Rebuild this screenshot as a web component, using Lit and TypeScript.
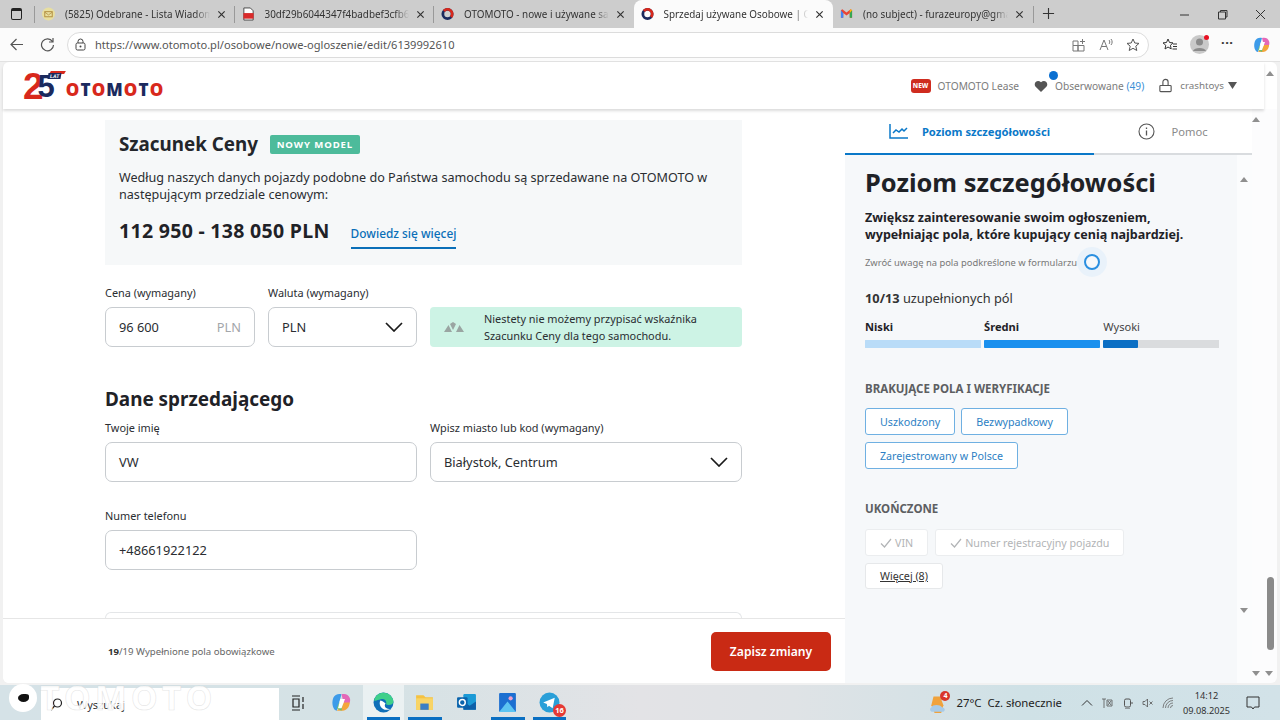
import {LitElement, html, css} from 'lit';
import {customElement} from 'lit/decorators.js';

const otoIcon = html`<svg class="fav" viewBox="0 0 14 14"><circle cx="7" cy="7" r="5" fill="none" stroke="#1b2a5e" stroke-width="3"/><path d="M7 2a5 5 0 0 1 0 10" fill="none" stroke="#d8281c" stroke-width="3" transform="rotate(-50 7 7)"/></svg>`;
const closeIcon = html`<svg class="tab-x" viewBox="0 0 10 10"><path d="M1.5 1.5l7 7M8.5 1.5l-7 7" stroke="#333" stroke-width="1.3" fill="none"/></svg>`;
const chevron = html`<svg class="chev" viewBox="0 0 18 10"><path d="M1 1l8 8 8-8" fill="none" stroke="#1a1a1a" stroke-width="1.7"/></svg>`;
const copilot = html`<svg class="copilot" viewBox="0 0 18 18"><path d="M2 5c1-3 5-4 7-3L7 9 5 16c-3 0-5-6-3-11z" fill="#3d9be9"/><path d="M9 2c3-1 6 0 7 3 1 2 0 5-1 6l-4-1z" fill="#e468b8"/><path d="M11 9h5c0 4-3 7-6 7H5z" fill="#f4a53c"/><path d="M5 14l2-5 3 1-1 6z" fill="#6cc070"/><path d="M8 6h4l-3 8H6z" fill="#fff"/></svg>`;

@customElement('app-root')
export class AppRoot extends LitElement {
  static styles = css`
    :host {
      display: block;
      position: relative;
      width: 1280px;
      height: 720px;
      overflow: hidden;
      background: #fff;
      font-family: "Noto Sans", "Open Sans", sans-serif;
      color: #1f2227;
    }

    /* browser chrome */
    .tabbar {
      height: 28px;
      background: #cdcdcd;
      display: flex;
      align-items: flex-end;
      font-size: 9.9px;
      color: #333;
    }
    .win-btn { width: 9px; height: 8px; border: 1.5px solid #222; border-top-width: 3px; border-radius: 2px; margin: 0 13px 8px 11px; flex: none; }
    .tab {
      height: 28px;
      display: flex;
      align-items: center;
      flex: none;
      position: relative;
      white-space: nowrap;
      width: 199.5px;
      box-sizing: border-box;
      padding: 0 9px 0 7px;
    }
    .tab-title { flex: 1; overflow: hidden; -webkit-mask-image: linear-gradient(90deg, #000 90%, transparent); mask-image: linear-gradient(90deg, #000 90%, transparent); }
    .tab.sep::before { content: ""; position: absolute; left: -1px; top: 6px; height: 17px; width: 1px; background: #999; }
    .tab.active { background: #fbfbfb; border-radius: 8px 8px 0 0; }
    .fav { width: 13px; height: 14px; flex: none; margin-right: 10px; }
    .tab-x { width: 9px; height: 9px; flex: none; margin-left: 7px; }
    .new-tab { width: 1px; height: 17px; background: #999; margin: 0 0 5px 0; flex: none; }
    .tab-plus { width: 13px; height: 13px; margin: 0 0 8px 8px; flex: none; }
    .win-ctrls { margin-left: auto; display: flex; gap: 27px; align-items: center; height: 28px; padding-right: 14px; }
    .win-ctrls svg { width: 11px; height: 11px; }

    .toolbar {
      height: 34px;
      box-sizing: border-box;
      background: #fbfbfb;
      border-bottom: 1px solid #e2e2e2;
      display: flex;
      align-items: center;
      padding-left: 9px;
    }
    .nav-ico { width: 15px; height: 15px; flex: none; }
    .nav-ico.reload { margin-left: 16px; }
    .omnibox {
      flex: none;
      width: 1082px;
      height: 26px;
      margin-left: 12px;
      box-sizing: border-box;
      border: 1px solid #dcdcdc;
      border-radius: 13px;
      background: #fff;
      display: flex;
      align-items: center;
      padding: 0 8px 0 7px;
      font-size: 11.1px;
      color: #555;
    }
    .omnibox .lock { width: 11px; height: 13px; margin-right: 9px; flex: none; }
    .omni-right { margin-left: auto; display: flex; gap: 13px; align-items: center; }
    .omni-right svg { width: 14px; height: 14px; }
    .tool-right { display: flex; align-items: center; margin-left: 13px; }
    .star { width: 16px; height: 16px; }
    .avatar { width: 19px; height: 19px; border-radius: 50%; background: #c9c9c9; position: relative; flex: none; margin-left: 12px; }
    .avatar svg { width: 19px; height: 19px; display: block; }
    .avatar::after { content: ""; position: absolute; right: 0; top: 0; width: 5px; height: 5px; border-radius: 50%; background: #e81123; }
    .dots { font-size: 13px; font-weight: 700; letter-spacing: 0.5px; line-height: 10px; margin: -5px 0 0 12px; color: #333; width: 16px; }
    .toolbar .copilot { width: 18px; height: 18px; margin-left: 16px; }

    /* page */
    .page {
      height: 623px;
      display: flex;
      flex-direction: column;
      background: #f1f1f1;
    }
    .site-header {
      height: 47px;
      flex: none;
      width: 1261px;
      margin-left: 3px;
      border-radius: 6px 0 0 0;
      box-sizing: border-box;
      padding: 0 27px 0 20px;
      display: flex;
      align-items: center;
      box-shadow: 0 2px 3px rgba(0,0,0,.14);
      position: relative;
      z-index: 2;
      background: #fff;
      font-size: 10.2px;
      color: #7c7c7c;
    }
    .logo { display: flex; align-items: flex-end; position: relative; height: 30px; width: 142px; }
    .logo-two { font: 700 37px/30px "Liberation Sans", sans-serif; color: #d8281c; position: relative; top: 1px; }
    .logo-five { font: 700 31px/30px "Liberation Sans", sans-serif; color: #1b2a5e; margin-left: -6px; position: relative; top: 1px; }
    .logo-bar { position: absolute; left: 27px; top: 0; width: 15px; height: 3px; background: #d8281c; transform: skewX(-30deg); }
    .logo-lat { position: absolute; left: 25px; top: 2px; font: 700 5px/6px "Liberation Sans", sans-serif; color: #fff; background: #1b2a5e; padding: 0 2px; transform: skewX(-10deg); }
    .logo-name { font: 800 17px/20px "Open Sans", sans-serif; letter-spacing: 1.1px; color: #1b2a5e; margin-left: 11px; margin-bottom: 1px; }
    .logo-name i { font-style: normal; color: #d8281c; }
    .head-links { margin-left: auto; display: flex; align-items: center; }
    .new { background: #cf2c1f; color: #fff; font: 800 6.5px/14px "Noto Sans", sans-serif; height: 14px; width: 20px; text-align: center; border-radius: 3px; margin-right: 7px; }
    .heart { position: relative; width: 14px; height: 14px; margin-left: 15px; margin-right: 7px; flex: none; }
    .heart svg { width: 14px; height: 14px; display: block; }
    .heart::after { content: ""; position: absolute; right: -9.5px; top: -7.5px; width: 9px; height: 9px; border-radius: 50%; background: #0a6fd1; }
    .blue { color: #3b8fd6; }
    .lock-user { width: 13px; height: 15px; margin-left: 15px; margin-right: 8px; flex: none; }
    .caret { width: 9px; height: 7px; margin-left: 4px; }
    .user { font-size: 9.8px; }

    .body { flex: 1; display: flex; min-height: 0; margin: 0 0 2px 3px; border-radius: 0 0 0 6px; overflow: hidden; }
    .main { width: 842px; flex: none; display: flex; flex-direction: column; position: relative; background: #fff; }
    .form { flex: 1; padding: 11px 0 0 102px; width: 637px; overflow: hidden; }
    .price-card { background: #f6f8f9; height: 145px; box-sizing: border-box; padding: 12px 14px 0 14px; }
    .price-title { display: flex; align-items: center; gap: 12px; font-size: 18.8px; line-height: 24px; font-weight: 700; color: #23262b; }
    .badge { background: #4dbb9b; color: #fff; font-size: 9.6px; font-weight: 700; letter-spacing: .9px; width: 90px; text-align: center; height: 19px; line-height: 19px; border-radius: 2px; }
    .price-desc { font-size: 12.6px; line-height: 17px; margin-top: 13px; width: 600px; color: #2a2d31; }
    .price-row { display: flex; align-items: flex-end; margin-top: 15px; }
    .price-value { font-size: 19.5px; font-weight: 700; letter-spacing: .3px; line-height: 26px; color: #1f2227; }
    .more { margin-left: 21px; font-size: 11.9px; font-weight: 500; color: #0a6fb8; border-bottom: 2px solid #0a6fb8; padding-bottom: 5px; line-height: 18px; margin-bottom: -5px; }

    .row { display: flex; gap: 13px; }
    .row-price { margin-top: 21px; align-items: flex-end; }
    .field label { display: block; font-size: 10.9px; line-height: 14px; margin-bottom: 7px; color: #2a2d31; }
    .input {
      height: 40px;
      box-sizing: border-box;
      border: 1px solid #c8ccd0;
      border-radius: 7px;
      background: #fff;
      display: flex;
      align-items: center;
      padding: 0 13px;
      font-size: 12.8px;
      color: #2a2d31;
    }
    .input .unit { margin-left: auto; color: #a3a6aa; }
    .chev { width: 18px; height: 10px; margin-left: auto; }
    .w150 { width: 150px; }
    .w149 { width: 149px; }
    .w312 { width: 312px; }
    .notice {
      flex: 1;
      height: 40px;
      background: #cdf3e5;
      border-radius: 4px;
      display: flex;
      align-items: center;
      font-size: 10.9px;
      line-height: 17px;
      color: #2a2d31;
      padding-left: 14px;
      box-sizing: border-box;
    }
    .notice svg { width: 20px; height: 10px; flex: none; margin-right: 20px; }
    h2 { font-size: 18.9px; font-weight: 700; line-height: 26px; margin: 0; color: #1f2227; }
    .sect { margin-top: 39px; }
    .row-seller { margin-top: 9px; }
    .phone { margin-top: 27px; }
    .cut { height: 6px; margin-top: 42px; border: 1px solid #e4e6e8; border-bottom: none; border-radius: 6px 6px 0 0; }

    .footer {
      position: absolute;
      left: 0; right: 0; bottom: 0;
      height: 65px;
      background: #fff;
      border-top: 1px solid #e6e6e6;
      box-sizing: border-box;
      display: flex;
      align-items: center;
      padding: 0 14px 0 105px;
      font-size: 9.6px;
      color: #666;
    }
    .footer b { color: #333; }
    .save {
      margin-left: auto;
      width: 120px;
      height: 39px;
      background: #c92a14;
      color: #fff;
      border-radius: 5px;
      font-size: 12.1px;
      font-weight: 600;
      display: flex;
      align-items: center;
      justify-content: center;
    }

    /* side panel */
    .side { width: 407px; flex: none; display: flex; flex-direction: column; background: linear-gradient(90deg, #f6f8fa 96.2%, #fbfcfd 96.2%); }
    .tabs { height: 46px; flex: none; display: flex; background: #fff; font-size: 11.2px; }
    .ptab { box-sizing: border-box; display: flex; align-items: center; justify-content: center; border-bottom: 2px solid #d9dcdf; color: #8a8a8a; }
    .ptab.on { width: 249px; border-bottom-color: #0a78c8; color: #0a78c8; font-weight: 700; }
    .ptab.off { flex: 1; }
    .ptab svg { width: 20px; height: 16px; margin-right: 13px; }
    .ptab.off svg { width: 17px; height: 17px; margin-right: 16px; }
    .side-body { flex: 1; padding: 11px 0 0 20px; }
    .side-body h1 { font-size: 25.4px; line-height: 32px; margin: 0; font-weight: 700; color: #1f2227; }
    .lead { font-size: 12.55px; line-height: 17px; font-weight: 700; margin-top: 11px; color: #1f2227; }
    .hint { display: flex; align-items: center; font-size: 9.4px; color: #777; margin-top: 8px; height: 22px; }
    .dot { width: 12px; height: 12px; border: 2px solid #2a8fe0; border-radius: 50%; margin: -1px 0 0 7px; box-shadow: 0 0 0 7px #e9f2fa; }
    .count { font-size: 12.8px; line-height: 18px; margin-top: 16px; color: #333; }
    .levels { display: flex; gap: 3.3px; width: 354px; margin-top: 12px; font-size: 11.1px; line-height: 16px; color: #444; }
    .level { flex: 1; }
    .level b { color: #1f2227; }
    .bar { height: 8px; margin-top: 5px; background: #dadcde; }
    .bar span { display: block; height: 100%; border-radius: 1px; }
    .sect-title { font-size: 11.5px; font-weight: 700; color: #5d5f62; line-height: 16px; margin-top: 33px; }
    .chips { display: flex; flex-wrap: wrap; gap: 7px 6px; margin-top: 11px; width: 330px; }
    .chip { height: 27px; box-sizing: border-box; border: 1px solid #6fb0e2; border-radius: 3px; padding: 0 14px; display: flex; align-items: center; font-size: 10.7px; color: #2d7fc4; background: #fff; }
    .chip.done { border-color: #ebedef; color: #b2b4b6; }
    .chip.done svg { width: 12px; height: 10px; margin-right: 3px; }
    .chip.more-chip { border-color: #e6e8ea; color: #333; text-decoration: underline; height: 26px; }
    .tight { margin-top: 32px; }
    .chips.c2 { margin-top: 12px; gap: 7px 7px; }

    /* scroll strip, lies over the page edge */
    .arrow { position: absolute; width: 0; height: 0; border-left: 4.5px solid transparent; border-right: 4.5px solid transparent; }
    .arrow.up { border-bottom: 5px solid #8f8f8f; }
    .arrow.down { border-top: 5px solid #8f8f8f; }
    .thumb { position: absolute; left: 1267px; top: 577px; width: 7px; height: 73px; background: #8a8a8a; border-radius: 4px; }
    .side-bg { position: absolute; left: 1252px; top: 109px; width: 25px; height: 574px; background: #fcfcfd; border-radius: 0 0 6px 0; }
    .top-strip { position: absolute; left: 1264px; top: 62px; width: 13px; height: 47px; background: #fff; border-radius: 0 6px 0 0; }

    /* taskbar */
    .taskbar {
      position: relative;
      height: 35px;
      background: linear-gradient(90deg, #d5e2e7 0, #d5e2e5 30%, #e3e3e6 50%, #dfe3e6 62%, #cfe1e6 80%, #d2e2e8 100%);
      display: flex;
      align-items: center;
      font-size: 12px;
      color: #222;
    }
    .start { width: 41px; flex: none; }
    .search { width: 238px; height: 32px; margin-top: 3px; background: #fff; flex: none; display: flex; align-items: center; padding-left: 9px; box-sizing: border-box; font-size: 11px; color: #333; }
    .search svg { width: 13px; height: 13px; margin-right: 14px; }
    .apps { display: flex; align-items: center; }
    .app { width: 41.5px; height: 35px; display: flex; align-items: center; justify-content: center; position: relative; flex: none; }
    .app svg { width: 21px; height: 21px; }
    .app.first { width: 38px; margin-right: 4px; }
    .app.first svg { width: 14px; height: 16px; }
    .app.cur { background: rgba(255,255,255,.5); }
    .app.run::after { content: ""; position: absolute; left: 4px; right: 4px; bottom: 0; height: 3px; background: #0a6fc2; }
    .count-badge { position: absolute; right: 4px; bottom: 3px; width: 13px; height: 13px; border-radius: 50%; background: #e53935; color: #fff; font-size: 7.5px; line-height: 13px; text-align: center; font-weight: 700; }
    .tray { margin-left: auto; display: flex; align-items: center; }
    .weather { width: 20px; height: 22px; position: relative; margin-right: 7px; flex: none; }
    .weather svg { width: 20px; height: 22px; display: block; }
    .weather span { position: absolute; right: -1px; top: -1px; width: 10px; height: 10px; border-radius: 50%; background: #d9362b; color: #fff; font-size: 7px; line-height: 10px; text-align: center; font-weight: 700; }
    .tray-txt { font-size: 11.4px; white-space: nowrap; }
    .tray-ico { display: flex; gap: 8.25px; align-items: center; margin-left: 19px; }
    .tray-ico svg { width: 12px; height: 12px; }
    .clock { font-size: 9.2px; line-height: 15px; text-align: center; margin-left: 9px; color: #333; }
    .notif { width: 14px; height: 14px; margin: 0 20px 0 16px; }
    /* watermark that sits over the start button and search box */
    .ghost { position: absolute; left: 40px; top: -7px; font: 700 34px/38px "Open Sans", sans-serif; letter-spacing: 4px; color: rgba(255,255,255,.92); -webkit-text-stroke: .6px rgba(190,190,190,.4); white-space: nowrap; }
    .ghost-dot { position: absolute; left: 9px; top: -1px; width: 28px; height: 28px; border-radius: 50%; background: #fff; display: flex; align-items: center; justify-content: center; }
    .ghost-dot::after { content: ""; width: 11px; height: 8px; border-radius: 50% 30% 50% 50%; background: #111; }
  `;

  private tab(title: string, icon: unknown, active = false, sep = true) {
    return html`<div class="tab ${active ? 'active' : ''} ${sep ? 'sep' : ''}">
      ${icon}<span class="tab-title">${title}</span>${closeIcon}
    </div>`;
  }

  render() {
    const mail = html`<svg class="fav" viewBox="0 0 14 14"><circle cx="7" cy="7" r="7" fill="#e8dfa0"/><rect x="3" y="4.5" width="8" height="5.5" fill="none" stroke="#b08a3c"/><path d="M3 5l4 3 4-3" fill="none" stroke="#b08a3c" stroke-width=".8"/></svg>`;
    const pdf = html`<svg class="fav" viewBox="0 0 14 14"><path d="M2 .5h7l3 3v10H2z" fill="#fff" stroke="#444"/><rect x="1.5" y="6" width="11" height="6" fill="#d92b2b"/></svg>`;
    const gmail = html`<svg class="fav" viewBox="0 0 14 14"><path d="M1 3v8h2.5V6L7 8.7 10.5 6v5H13V3l-1.5-1L7 5.4 2.5 2z" fill="#ea4335"/><path d="M1 3v8h2.5V6z" fill="#4285f4"/><path d="M13 3v8h-2.5V6z" fill="#34a853"/><path d="M10.5 6L13 3l-1.5-1-1 .8z" fill="#fbbc04"/></svg>`;
    return html`
      <div class="tabbar">
        <div class="win-btn"></div>
        ${this.tab('(5825) Odebrane - Lista Wiadomości', mail)}
        ${this.tab('30df29b6044347f4badbef3cfb6b4a21', pdf)}
        ${this.tab('OTOMOTO - nowe i używane samochody', otoIcon)}
        ${this.tab('Sprzedaj używane Osobowe | Otomoto', otoIcon, true, false)}
        ${this.tab('(no subject) - furazeuropy@gmail.com', gmail, false, false)}
        <div class="new-tab"></div>
        <svg class="tab-plus" viewBox="0 0 14 14"><path d="M7 1v12M1 7h12" stroke="#333" stroke-width="1.2"/></svg>
        <div class="win-ctrls">
          <svg viewBox="0 0 11 11"><path d="M1 6h9" stroke="#333"/></svg>
          <svg viewBox="0 0 11 11"><path d="M1.5 3h7v7h-7zM3.5 3V1.5h6.5V8H8.5" fill="none" stroke="#333"/></svg>
          <svg viewBox="0 0 11 11"><path d="M1 1l9 9M10 1l-9 9" stroke="#333"/></svg>
        </div>
      </div>

      <div class="toolbar">
        <svg class="nav-ico" viewBox="0 0 15 15"><path d="M14 7.5H2M7.5 2L2 7.5 7.5 13" fill="none" stroke="#555" stroke-width="1.2"/></svg>
        <svg class="nav-ico reload" viewBox="0 0 15 15"><path d="M12.5 4.5A6 6 0 1 0 13.5 8M13 1v4H9" fill="none" stroke="#555" stroke-width="1.2"/></svg>
        <div class="omnibox">
          <svg class="lock" viewBox="0 0 11 13"><rect x="1" y="5" width="9" height="7" rx="1.5" fill="none" stroke="#444"/><path d="M3 5V3.500a2.500 2.500 0 0 1 5 0V5" fill="none" stroke="#444"/><circle cx="5.500" cy="8.500" r="1" fill="#444"/></svg>
          <span>https://www.otomoto.pl/osobowe/nowe-ogloszenie/edit/6139992610</span>
          <div class="omni-right">
            <svg viewBox="0 0 14 14"><path d="M1 3h5v4.500H1zM1 7.500h5V13H1zM6 7.500h6V13H6zM8 3.500h5M10.500 1v5" fill="none" stroke="#777"/></svg>
            <svg viewBox="0 0 14 14"><path d="M1 12L5 2l4 10M2.500 8.500h5M10 2c1 1 1 3 0 4M12 1c1.500 2 1.500 4 0 6" fill="none" stroke="#777"/></svg>
            <svg viewBox="0 0 14 14"><path d="M7 1l1.800 4 4.200.4-3.200 2.800 1 4.300L7 10.300 3.200 12.500l1-4.300L1 5.400 5.200 5z" fill="none" stroke="#555"/></svg>
          </div>
        </div>
        <div class="tool-right">
          <svg class="star" viewBox="0 0 16 16"><path d="M6 2l1.500 3.500 3.500.4-2.600 2.400.8 3.600L6 10 3 12l.8-3.700L1 5.900l3.500-.4zM11 7h4M11 9.500h4M10.500 12h4.500" fill="none" stroke="#333"/></svg>
          <div class="avatar"><svg viewBox="0 0 19 19"><circle cx="9.500" cy="7" r="3.500" fill="#8b8b8b"/><path d="M3 16c1-4 12-4 13 0z" fill="#8b8b8b"/></svg></div>
          <div class="dots">···</div>
          ${copilot}
        </div>
      </div>

      <div class="page">
        <div class="site-header">
          <div class="logo">
            <span class="logo-two">2</span><span class="logo-five">5</span>
            <span class="logo-bar"></span>
            <span class="logo-lat">LAT</span>
            <span class="logo-name"><i>O</i>T<i>O</i>M<i>O</i>T<i>O</i></span>
          </div>
          <div class="head-links">
            <span class="new">NEW</span><span>OTOMOTO Lease</span>
            <span class="heart"><svg viewBox="0 0 15 14"><path d="M7.500 13.500L1.500 7.500C-1 4 3.500-.5 7.500 3c4-3.500 8.500 1 6 4.500z" fill="#555"/></svg></span>
            <span>Obserwowane <span class="blue">(49)</span></span>
            <svg class="lock-user" viewBox="0 0 15 16"><rect x="1" y="8" width="13" height="7" rx="1" fill="none" stroke="#555" stroke-width="1.300"/><path d="M4.500 8V4a3 3 0 0 1 6 0v4" fill="none" stroke="#555" stroke-width="1.300"/></svg>
            <span class="user">crashtoys</span>
            <svg class="caret" viewBox="0 0 9 7"><path d="M0 0h9L4.500 7z" fill="#555"/></svg>
          </div>
        </div>

        <div class="body">
          <div class="main">
            <div class="form">
              <div class="price-card">
                <div class="price-title">Szacunek Ceny <span class="badge">NOWY MODEL</span></div>
                <div class="price-desc">Według naszych danych pojazdy podobne do Państwa samochodu są sprzedawane na OTOMOTO w następującym przedziale cenowym:</div>
                <div class="price-row">
                  <span class="price-value">112 950 - 138 050 PLN</span>
                  <span class="more">Dowiedz się więcej</span>
                </div>
              </div>

              <div class="row row-price">
                <div class="field w150"><label>Cena (wymagany)</label><div class="input"><span>96 600</span><span class="unit">PLN</span></div></div>
                <div class="field w149"><label>Waluta (wymagany)</label><div class="input"><span>PLN</span>${chevron}</div></div>
                <div class="notice">
                  <svg viewBox="0 0 20 10"><path d="M0 10L4.500 3 8 10zM6 2l3-2 3 2-3 6zM12 10l3.500-7L20 10z" fill="#9aa5a2"/></svg>
                  <span>Niestety nie możemy przypisać wskaźnika<br>Szacunku Ceny dla tego samochodu.</span>
                </div>
              </div>

              <h2 class="sect">Dane sprzedającego</h2>
              <div class="row row-seller">
                <div class="field w312"><label>Twoje imię</label><div class="input"><span>VW</span></div></div>
                <div class="field w312"><label>Wpisz miasto lub kod (wymagany)</label><div class="input"><span>Białystok, Centrum</span>${chevron}</div></div>
              </div>
              <div class="field w312 phone"><label>Numer telefonu</label><div class="input"><span>+48661922122</span></div></div>
              <div class="cut"></div>
            </div>
            <div class="footer">
              <span><b>19</b>/19 Wypełnione pola obowiązkowe</span>
              <div class="save">Zapisz zmiany</div>
            </div>
          </div>

          <aside class="side">
            <div class="tabs">
              <div class="ptab on">
                <svg viewBox="0 0 20 16"><path d="M1 1v14h18" fill="none" stroke="#0a78c8" stroke-width="1.500"/><path d="M4 10l3-3 3 2 3-3 2 2 3-3" fill="none" stroke="#0a78c8" stroke-width="1.500"/></svg>
                Poziom szczegółowości
              </div>
              <div class="ptab off">
                <svg viewBox="0 0 17 17"><circle cx="8.500" cy="8.500" r="7.500" fill="none" stroke="#555" stroke-width="1.100"/><path d="M8.500 7.500v5M8.500 4.500v1.500" stroke="#555" stroke-width="1.300"/></svg>
                Pomoc
              </div>
            </div>
            <div class="side-body">
              <h1>Poziom szczegółowości</h1>
              <div class="lead">Zwiększ zainteresowanie swoim ogłoszeniem,<br>wypełniając pola, które kupujący cenią najbardziej.</div>
              <div class="hint">Zwróć uwagę na pola podkreślone w formularzu<span class="dot"></span></div>
              <div class="count"><b>10/13</b> uzupełnionych pól</div>
              <div class="levels">
                <div class="level"><b>Niski</b><div class="bar"><span style="width:100%;background:#b9dcf8"></span></div></div>
                <div class="level"><b>Średni</b><div class="bar"><span style="width:100%;background:#1a90ee"></span></div></div>
                <div class="level">Wysoki<div class="bar"><span style="width:30%;background:#0b6fc4"></span></div></div>
              </div>
              <div class="sect-title">BRAKUJĄCE POLA I WERYFIKACJE</div>
              <div class="chips">
                <span class="chip">Uszkodzony</span>
                <span class="chip">Bezwypadkowy</span>
                <span class="chip">Zarejestrowany w Polsce</span>
              </div>
              <div class="sect-title tight">UKOŃCZONE</div>
              <div class="chips c2">
                <span class="chip done"><svg viewBox="0 0 12 10"><path d="M1 5.500l3.500 3.500L11 1" fill="none" stroke="#b2b4b6" stroke-width="1.200"/></svg>VIN</span>
                <span class="chip done"><svg viewBox="0 0 12 10"><path d="M1 5.500l3.500 3.500L11 1" fill="none" stroke="#b2b4b6" stroke-width="1.200"/></svg>Numer rejestracyjny pojazdu</span>
                <span class="chip more-chip">Więcej (8)</span>
              </div>
            </div>
          </aside>
        </div>
      </div>

      <div class="taskbar">
        <div class="start"></div>
        <div class="search">
          <svg viewBox="0 0 13 13"><circle cx="7.500" cy="5" r="4" fill="none" stroke="#222" stroke-width="1.200"/><path d="M4.500 8L1 12" stroke="#222" stroke-width="1.400"/></svg>
          <span>Wyszukaj</span>
        </div>
        <div class="apps">
          <div class="app first"><svg viewBox="0 0 14 16"><path d="M1 1h8M1 15h8M2 4h6v8H2zM12 2v5M12 9v5" fill="none" stroke="#222" stroke-width="1.200"/></svg></div>
          <div class="app">${copilot}</div>
          <div class="app cur run"><svg viewBox="0 0 20 20"><circle cx="10" cy="10" r="9.500" fill="#0f6fb8"/><path d="M1 8C3-2 18-2 19.500 9c0 3-4 4-7 3 1-4-2-6-5-5-3 .5-5 2-6.500 1z" fill="#3fd08a"/><path d="M7 8c-2 4 1 9 6 9 2 0 3-.5 4-1-5 1-7-3-5-5-2-2-4-3-5-3z" fill="#fff"/></svg></div>
          <div class="app run"><svg viewBox="0 0 20 20"><path d="M2 3h7l2 2h7v12H2z" fill="#f5c242"/><rect x="2" y="6" width="16" height="11" fill="#f8d466"/><rect x="6" y="11" width="8" height="6" fill="#3b7fc4"/></svg></div>
          <div class="app"><svg viewBox="0 0 20 20"><rect x="7" y="2" width="12" height="15" rx="1" fill="#1b9ad6"/><path d="M7 9l6 4 6-4v8H7z" fill="#0d5fa8"/><rect x="1" y="5" width="10" height="10" rx="1" fill="#0a64ad"/><circle cx="6" cy="10" r="2.800" fill="none" stroke="#fff" stroke-width="1.400"/></svg></div>
          <div class="app run"><svg viewBox="0 0 20 20"><rect x="2" y="1" width="16" height="18" rx="1" fill="#1c6fd1"/><path d="M2 19L10 9l8 10z" fill="#5cc4f2"/><circle cx="13" cy="6" r="2" fill="#f0a0c8"/></svg></div>
          <div class="app run">
            <svg viewBox="0 0 20 20"><circle cx="10" cy="10" r="9.500" fill="#2a9fd8"/><path d="M4 10l11-4.500-2 10-3.500-2.500-1.500 1.500-.5-3z" fill="#fff"/></svg>
            <span class="count-badge">16</span>
          </div>
        </div>
        <div class="tray">
          <div class="weather"><svg viewBox="0 0 18 20"><path d="M4 4h6l3 8-2 7H5L2 12z" fill="#f0a23c"/><path d="M2 14c1-3 8-3 10 0 3 0 3 4 0 4H3c-2 0-3-3-1-4z" fill="#a8cbe8"/></svg><span>4</span></div>
          <span class="tray-txt">27°C&nbsp; Cz. słonecznie</span>
          <div class="tray-ico">
            <svg viewBox="0 0 12 12"><path d="M1 8.500L6 3.500l5 5" fill="none" stroke="#333"/></svg>
            <svg viewBox="0 0 12 12"><path d="M3 2v9M1 2h4M6 3h5v6H6zM7 4l3 4M10 4L7 8" fill="none" stroke="#555" stroke-width=".8"/></svg>
            <svg viewBox="0 0 12 12"><rect x="2.500" y="2" width="6" height="8" rx="1.500" fill="none" stroke="#555"/><path d="M3 12h5M10 5v2" stroke="#555"/></svg>
            <svg viewBox="0 0 12 12"><path d="M1 4.500v3h2l2.500 2.500V2L3 4.500zM7.500 4.500l3 3M10.500 4.500l-3 3" fill="none" stroke="#555" stroke-width=".8"/></svg>
            <svg viewBox="0 0 12 12"><path d="M1 11a10 10 0 0 1 10-10M3.500 11a7.500 7.500 0 0 1 7.500-7.500M6 11a5 5 0 0 1 5-5M8.500 11a2.500 2.500 0 0 1 2.500-2.500" fill="none" stroke="#666" stroke-width=".8"/></svg>
          </div>
          <div class="clock">14:12<br>09.08.2025</div>
          <svg class="notif" viewBox="0 0 14 14"><path d="M1 1h12v10H8.500L7 13l-1.500-2H1z" fill="none" stroke="#333"/></svg>
        </div>
        <div class="ghost-dot"></div>
        <div class="ghost">TOMOTO</div>
      </div>

      <div class="side-bg"></div>
      <div class="top-strip"></div>
      <span class="arrow up" style="left:1266px;top:71px"></span>
      <span class="arrow up" style="left:1252px;top:117px"></span>
      <span class="arrow up" style="left:1240px;top:177px"></span>
      <span class="arrow down" style="left:1240px;top:608px"></span>
      <span class="arrow down" style="left:1252px;top:671px"></span>
      <span class="arrow down" style="left:1265px;top:671px"></span>
      <div class="thumb"></div>
    `;
  }
}
